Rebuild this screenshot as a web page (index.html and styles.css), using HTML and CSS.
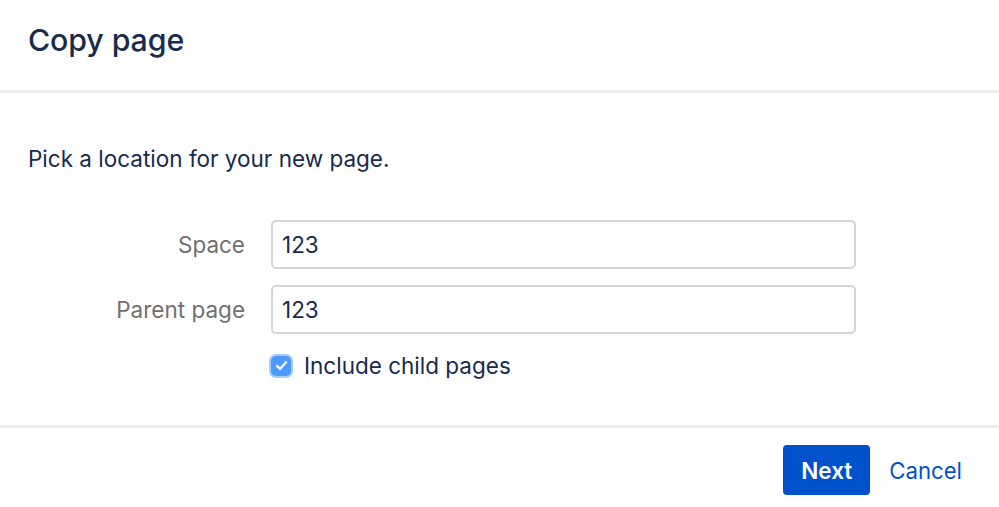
FILE: index.html
```html
<!DOCTYPE html>
<html>
<head>
<meta charset="utf-8">
<link rel="stylesheet" href="styles.css">
</head>
<body>
<div class="dialog">
  <header class="dialog-header">
    <h1 class="title">Copy page</h1>
  </header>
  <main class="dialog-body">
    <p class="intro">Pick a location for your new page.</p>
    <div class="form">
      <div class="row">
        <label class="label">Space</label>
        <div class="input">123</div>
      </div>
      <div class="row">
        <label class="label">Parent page</label>
        <div class="input">123</div>
      </div>
      <div class="row check-row">
        <span class="label"></span>
        <span class="checkbox">
          <svg viewBox="0 0 20 20" width="17" height="17"><path d="M4.5 10.5 L8.3 14 L15.5 6" fill="none" stroke="#fff" stroke-width="2.6" stroke-linecap="round" stroke-linejoin="round"/></svg>
        </span>
        <span class="check-label">Include child pages</span>
      </div>
    </div>
  </main>
  <footer class="dialog-footer">
    <button class="btn-primary">Next</button>
    <a class="btn-link">Cancel</a>
  </footer>
</div>
</body>
</html>
```
FILE: styles.css
```css
html, body {
  margin: 0;
  padding: 0;
  background: #fff;
}
body {
  font-family: Inter, "Liberation Sans", sans-serif;
  color: #172B4D;
}
.dialog {
  width: 999px;
  height: 507px;
  display: flex;
  flex-direction: column;
}
.dialog-header {
  height: 90px;
  border-bottom: 3px solid #EBECF0;
  padding: 0 28px;
  display: flex;
  align-items: center;
  box-sizing: content-box;
}
.title {
  margin: 0;
  font-size: 30.3px;
  font-weight: 500;
  color: #172B4D;
  letter-spacing: -0.1px;
  position: relative;
  top: -5px;
}
.dialog-body {
  height: 332px;
  padding: 0 28px;
  border-bottom: 3px solid #EBECF0;
}
.intro {
  margin: 52px 0 0 0;
  font-size: 22.5px;
  line-height: 28px;
}
.form {
  margin-top: 47px;
  display: flex;
  flex-direction: column;
  gap: 16px;
}
.row {
  display: flex;
  align-items: center;
}
.label {
  width: 217px;
  text-align: right;
  padding-right: 26px;
  font-size: 22.5px;
  color: #707070;
  flex: none;
}
.input {
  width: 572px;
  height: 45px;
  border: 2px solid #D5D5D5;
  border-radius: 5px;
  font-size: 22.5px;
  line-height: 45px;
  padding-left: 9px;
  box-sizing: content-box;
  color: #172B4D;
}
.check-row {
  margin-top: 2px;
}
.check-row .label {
  width: 216px;
}
.checkbox {
  width: 20px;
  height: 20px;
  border-radius: 5px;
  background: #4C9AFF;
  box-shadow: 0 0 0 2px #A6CCFF;
  display: flex;
  align-items: center;
  justify-content: center;
  margin-left: 1px;
  flex: none;
}
.check-label {
  margin-left: 13px;
  font-size: 22.5px;
}
.dialog-footer {
  display: flex;
  justify-content: flex-end;
  align-items: center;
  padding: 17px 37px 0 0;
}
.btn-primary {
  width: 87px;
  height: 50px;
  background: #0052CC;
  color: #fff;
  border: none;
  border-radius: 4px;
  font-family: inherit;
  font-size: 22.5px;
  font-weight: 600;
  padding: 0;
}
.btn-link {
  margin-left: 19px;
  font-size: 22.2px;
  color: #0052CC;
}
```
